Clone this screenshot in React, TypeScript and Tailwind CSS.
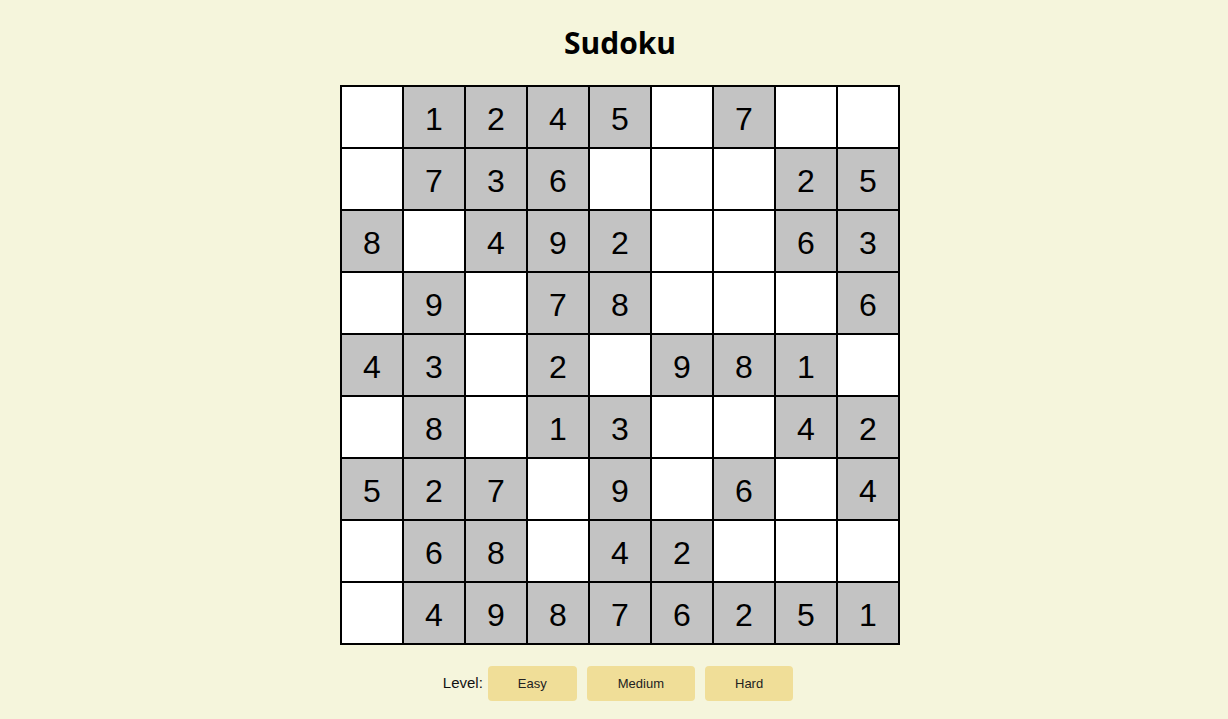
import React from 'react';

// 0 = empty cell
const board: number[][] = [
  [0, 1, 2, 4, 5, 0, 7, 0, 0],
  [0, 7, 3, 6, 0, 0, 0, 2, 5],
  [8, 0, 4, 9, 2, 0, 0, 6, 3],
  [0, 9, 0, 7, 8, 0, 0, 0, 6],
  [4, 3, 0, 2, 0, 9, 8, 1, 0],
  [0, 8, 0, 1, 3, 0, 0, 4, 2],
  [5, 2, 7, 0, 9, 0, 6, 0, 4],
  [0, 6, 8, 0, 4, 2, 0, 0, 0],
  [0, 4, 9, 8, 7, 6, 2, 5, 1],
];

const levels = ['Easy', 'Medium', 'Hard'];

export default function App() {
  return (
    <main
      className="min-h-[719px] w-full bg-[#f5f5dc] flex flex-col items-center pl-[12px]"
      style={{ fontFamily: '"Liberation Sans", Arial, sans-serif' }}
    >
      <h1
        className="mt-[25px] h-[36px] leading-[36px] text-[30px] font-bold text-black"
        style={{ fontFamily: '"Open Sans", "Noto Sans", sans-serif' }}
      >
        Sudoku
      </h1>

      {/* board */}
      <div className="mt-[24px] border border-black grid grid-cols-9 w-[560px]">
        {board.flat().map((n, i) => (
          <div
            key={i}
            className={`w-[62px] h-[62px] border border-black flex items-center justify-center pt-[3px] text-[32px] text-black ${
              n ? 'bg-[#c3c3c3]' : 'bg-white'
            }`}
          >
            {n ? n : ''}
          </div>
        ))}
      </div>

      {/* level picker */}
      <div className="mt-[21px] flex items-center gap-[10px] mr-[4px]">
        <span className="text-[15px] text-[#111] mr-[-5px]">Level:</span>
        {levels.map((l) => (
          <button
            key={l}
            className={`h-[35px] rounded-[4px] bg-[#f0de98] text-[13px] text-[#222] ${
              l === 'Medium' ? 'px-[31px]' : 'px-[30px]'
            }`}
          >
            {l}
          </button>
        ))}
      </div>
    </main>
  );
}
